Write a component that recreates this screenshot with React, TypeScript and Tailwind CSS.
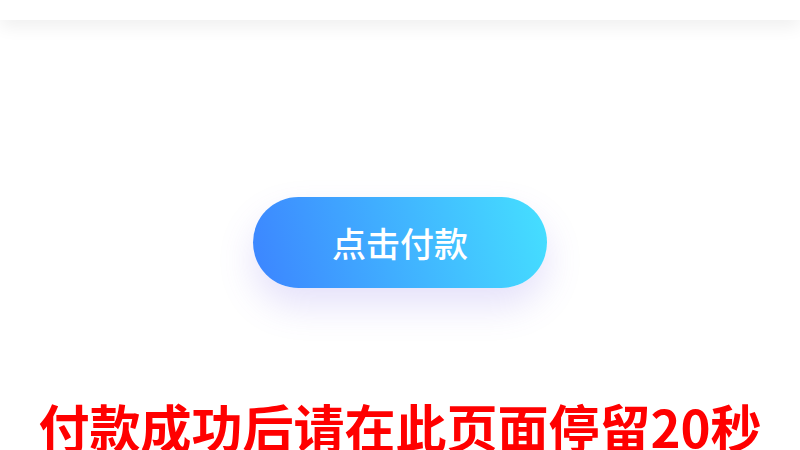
import React from "react";

export default function App() {
  return (
    <div className="w-[800px] h-[450px] overflow-hidden bg-white flex flex-col items-center" style={{ fontFamily: '"Noto Sans CJK SC", "Noto Sans", sans-serif' }}>
      <div className="w-full h-[20px] bg-white shadow-[0_6px_18px_rgba(0,0,0,0.07)] shrink-0" />
      <div className="mt-[177px] w-[294px] h-[91px] rounded-full bg-[linear-gradient(75deg,#3c84ff,#45e0ff)] shadow-[0_18px_36px_rgba(110,90,230,0.18)] flex items-center justify-center shrink-0">
        <span className="text-white text-[34px] font-medium leading-none">点击付款</span>
      </div>
      <div className="mt-[113px] text-[#ff0000] text-[51px] font-bold leading-none whitespace-nowrap shrink-0">付款成功后请在此页面停留20秒</div>
    </div>
  );
}
